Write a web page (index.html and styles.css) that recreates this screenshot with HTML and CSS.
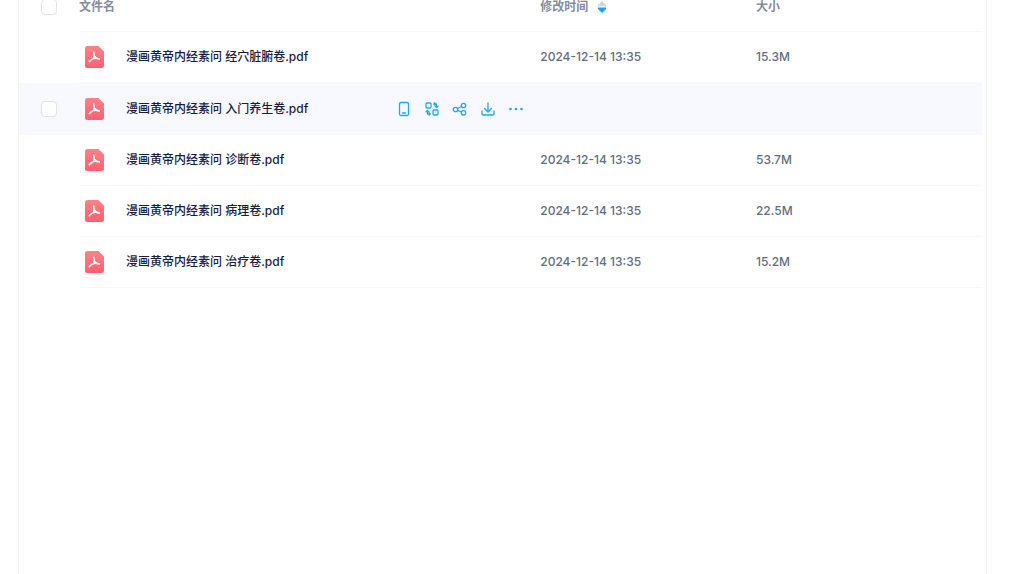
FILE: index.html
```html
<!DOCTYPE html>
<html lang="zh-CN">
<head>
<meta charset="utf-8">
<title>文件列表</title>
<link rel="stylesheet" href="styles.css">
</head>
<body>
<svg class="defs" aria-hidden="true">
  <defs>
    <linearGradient id="pdf-fill" x1="0" y1="0" x2="0" y2="1">
      <stop offset="0" stop-color="#ff8287"/>
      <stop offset="1" stop-color="#ff5f70"/>
    </linearGradient>
    <symbol id="pdf" viewBox="0 0 19 22">
      <path d="M2.500 0H13.500L19 5.500V19.500a2.500 2.500 0 0 1-2.500 2.500h-14A2.500 2.500 0 0 1 0 19.500v-17A2.500 2.500 0 0 1 2.500 0z" fill="url(#pdf-fill)"/>
      <path d="M8.700 6.200c.9 2.300.8 4.300 0 6.300M8.900 8.500c.6 2.500 2.600 4.400 5.400 4.500M4.300 15.600c1.300-1.600 2.700-2.600 4.400-3.100 1.600-.5 3.600-.4 5.600.5" fill="none" stroke="#fff" stroke-width="1.700" stroke-linecap="round" stroke-linejoin="round"/>
    </symbol>
  </defs>
</svg>
<main class="panel">
  <table class="files">
    <colgroup><col class="col-check"><col class="col-name"><col class="col-time"><col class="col-size"></colgroup>
    <thead>
      <tr>
        <th class="check"><input type="checkbox" class="box" aria-label="全选"></th>
        <th>文件名</th>
        <th><button class="sort" type="button">修改时间<svg width="8" height="12" viewBox="0 0 8 12"><path d="M4 0l4 4v1.500H0V4z" fill="#d3d6de"/><path d="M0 6.500h8V8l-4 4-4-4z" fill="#06a7ff"/></svg></button></th>
        <th>大小</th>
      </tr>
    </thead>
    <tbody>
      <tr>
        <td class="check"></td>
        <td><div class="name"><svg class="icon"><use href="#pdf"/></svg><a href="#">漫画黄帝内经素问 经穴脏腑卷.pdf</a></div></td>
        <td>2024-12-14 13:35</td><td>15.3M</td>
      </tr>
      <tr class="active">
        <td class="check"><input type="checkbox" class="box" aria-label="选择 入门养生卷"></td>
        <td><div class="name"><svg class="icon"><use href="#pdf"/></svg><a href="#">漫画黄帝内经素问 入门养生卷.pdf</a>
          <div class="actions">
            <button type="button" aria-label="发送到手机"><svg viewBox="0 0 16 16"><rect x="3.500" y="1.500" width="9" height="13" rx="1.500"/><path d="M6.500 12h3"/></svg></button>
            <button type="button" aria-label="转换"><svg viewBox="0 0 16 16"><rect x="2" y="2" width="5" height="5" rx="1"/><rect x="9" y="9" width="5" height="5" rx="1"/><path d="M10 3h2.500v3M11.200 5.200l1.300 1.300 1.500-1.300M10.800 1.800L9.800 3l1 1.200M6 13H3.500v-3M4.800 10.800L3.500 9.500 2 10.800M5.200 14.200l1-1.200-1-1.200"/></svg></button>
            <button type="button" aria-label="分享"><svg viewBox="0 0 16 16"><circle cx="3.500" cy="8.500" r="2.200"/><circle cx="11.500" cy="4.500" r="2.200"/><circle cx="11.500" cy="11.800" r="2.200"/><path d="M5.500 7.500l4-2M5.600 9.300l3.800 1.700"/></svg></button>
            <button type="button" aria-label="下载"><svg viewBox="0 0 16 16"><path d="M8 2v8.500M4.500 7.500L8 11l3.500-3.500M2 10v3a1 1 0 0 0 1 1h10a1 1 0 0 0 1-1v-3"/></svg></button>
            <button type="button" aria-label="更多"><svg viewBox="0 0 16 16"><g class="dots"><circle cx="2.500" cy="8" r="1.300"/><circle cx="8" cy="8" r="1.300"/><circle cx="13.500" cy="8" r="1.300"/></g></svg></button>
          </div></div></td>
        <td></td><td></td>
      </tr>
      <tr>
        <td class="check"></td>
        <td><div class="name"><svg class="icon"><use href="#pdf"/></svg><a href="#">漫画黄帝内经素问 诊断卷.pdf</a></div></td>
        <td>2024-12-14 13:35</td><td>53.7M</td>
      </tr>
      <tr>
        <td class="check"></td>
        <td><div class="name"><svg class="icon"><use href="#pdf"/></svg><a href="#">漫画黄帝内经素问 病理卷.pdf</a></div></td>
        <td>2024-12-14 13:35</td><td>22.5M</td>
      </tr>
      <tr>
        <td class="check"></td>
        <td><div class="name"><svg class="icon"><use href="#pdf"/></svg><a href="#">漫画黄帝内经素问 治疗卷.pdf</a></div></td>
        <td>2024-12-14 13:35</td><td>15.2M</td>
      </tr>
    </tbody>
  </table>
</main>
</body>
</html>
```
FILE: styles.css
```css
* { box-sizing: border-box; }
html, body { height: 100%; }
body {
  margin: 0;
  display: flex;
  overflow: hidden;
  background: #fff;
  font: 12px/16px Inter, "Noto Sans CJK SC", sans-serif;
  color: #636d7e;
}
.defs { position: absolute; width: 0; height: 0; }
/* The list is scrolled so that the header is partly out of view. */
.panel {
  flex: 1;
  margin: -18px 37px 0 18px;
  padding-right: 4px;
  border: solid #f2f2f4;
  border-width: 0 1px;
}
.files {
  width: 100%;
  table-layout: fixed;
  border-spacing: 0;
}
.col-check { width: 60px; }
.col-name { width: 47.9%; }
.col-time { width: 22.4%; }
th, td {
  padding: 0;
  text-align: left;
  border-bottom: 1px solid #f7f7f9;
}
th { height: 50px; font-weight: 600; color: #878c9c; }
td { height: 51px; font-weight: 500; }
th.check, td.check { padding-left: 22px; border-bottom-color: transparent; }
.active td { height: 52px; background: #f7f9fe; border-color: #f7f9fe; }
.box {
  display: block;
  appearance: none;
  width: 16px;
  height: 16px;
  margin: 0;
  border: 1px solid #e1e3ea;
  border-radius: 4px;
  background: #fff;
}
.sort {
  display: flex;
  align-items: center;
  gap: 10px;
  padding: 0;
  border: 0;
  background: none;
  font: inherit;
  color: inherit;
}
.name { display: flex; align-items: center; padding: 0 16px 0 6px; }
.icon { width: 19px; height: 22px; margin-right: 22px; }
.name a { color: #171c42; text-decoration: none; }
.actions { display: flex; gap: 12px; margin-left: auto; }
.actions button {
  display: flex;
  width: 16px;
  height: 16px;
  padding: 0;
  border: 0;
  background: none;
}
.actions svg {
  width: 16px;
  height: 16px;
  fill: none;
  stroke: #20a8fa;
  stroke-width: 1.3;
  stroke-linecap: round;
  stroke-linejoin: round;
}
.actions .dots { fill: #20a8fa; stroke: none; }
```
